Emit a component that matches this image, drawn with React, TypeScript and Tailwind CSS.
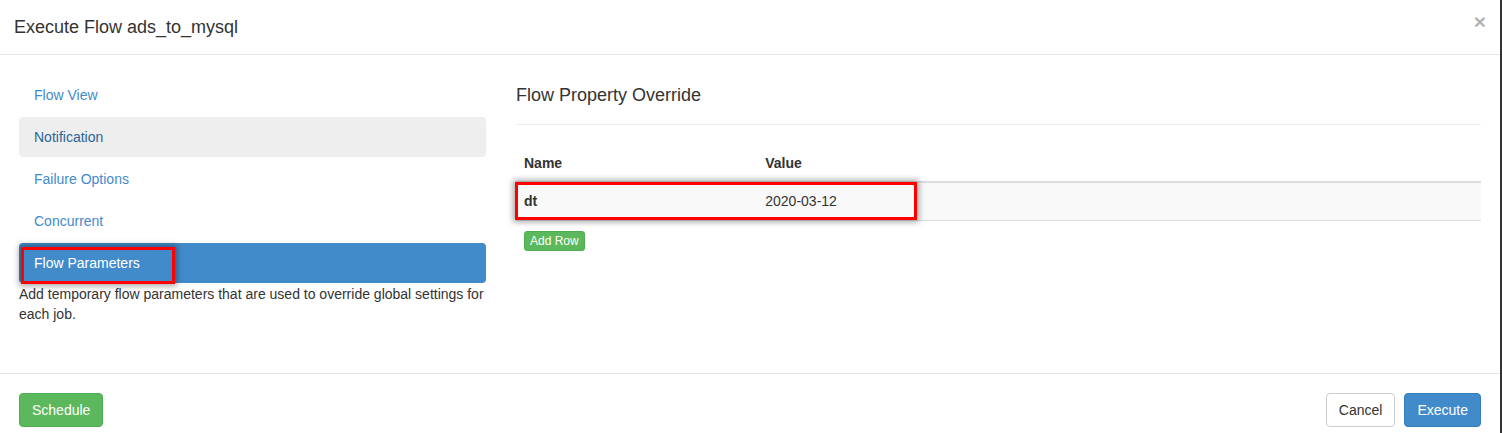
import React from 'react';

type NavItem = {
  key: string;
  label: string;
};

const navItems: NavItem[] = [
  { key: 'flow-view', label: 'Flow View' },
  { key: 'notification', label: 'Notification' },
  { key: 'failure', label: 'Failure Options' },
  { key: 'concurrent', label: 'Concurrent' },
  { key: 'params', label: 'Flow Parameters' },
];

const App: React.FC = () => {
  const hovered = 'notification';
  const active = 'params';

  return (
    <div
      className="relative h-[433px] w-[1502px] overflow-hidden bg-white text-[14px] text-[#333]"
      style={{ fontFamily: '"Liberation Sans", Arial, sans-serif' }}
    >
      <div className="flex h-full w-[1500px] flex-col">
        {/* header */}
        <div className="flex h-[55px] shrink-0 items-center justify-between border-b border-[#e5e5e5] pl-[14px] pr-[14px]">
          <h4 className="text-[18px] leading-[26px] text-[#333]">Execute Flow ads_to_mysql</h4>
          <button type="button" className="mb-[12px] text-[21px] font-bold leading-none text-[#b3b3b3]">
            ×
          </button>
        </div>

        {/* body */}
        <div className="flex h-[318px] shrink-0 gap-[30px] px-[19px] pt-[20px]">
          <div className="w-[467px] shrink-0">
            <ul className="flex flex-col gap-[2px]">
              {navItems.map((item) => {
                const isActive = item.key === active;
                const isHover = item.key === hovered;
                return (
                  <li key={item.key} className="relative">
                    <a
                      className={
                        'block h-[40px] rounded-[4px] pl-[15px] leading-[40px] ' +
                        (isActive
                          ? 'bg-[#428bca] text-white'
                          : isHover
                          ? 'bg-[#eeeeee] text-[#2a6496]'
                          : 'text-[#428bca]')
                      }
                    >
                      {item.label}
                    </a>
                    {isActive && (
                      <div className="pointer-events-none absolute left-[2px] top-[4px] h-[37px] w-[154px] border-[3px] border-[#ff0000] shadow-[0_0_6px_2px_rgba(0,0,0,0.35)]" />
                    )}
                  </li>
                );
              })}
            </ul>
            <p className="mt-[1px] leading-[20px] text-[#333]">
              Add temporary flow parameters that are used to override global settings for each job.
            </p>
          </div>

          <div className="flex-1">
            <h3 className="h-[40px] text-[18px] leading-[40px] text-[#333]">Flow Property Override</h3>
            <hr className="mt-[9px] border-t border-[#eeeeee]" />
            <div className="relative mt-[20px]">
              <table className="w-full border-collapse">
                <thead>
                  <tr className="border-b-2 border-[#dddddd]">
                    <th className="w-1/4 px-[8px] py-[8px] text-left font-bold leading-[20px]">Name</th>
                    <th className="px-[8px] py-[8px] text-left font-bold leading-[20px]">Value</th>
                  </tr>
                </thead>
                <tbody>
                  <tr className="border-b border-[#dddddd] bg-[#f9f9f9]">
                    <td className="px-[8px] py-[8px] font-bold leading-[21px]">dt</td>
                    <td className="px-[8px] py-[8px] leading-[21px]">2020-03-12</td>
                  </tr>
                </tbody>
              </table>
              <div className="pointer-events-none absolute left-[-1px] top-[37px] h-[38px] w-[402px] border-[3px] border-[#ff0000] shadow-[0_0_6px_2px_rgba(0,0,0,0.35)]" />
              <button
                type="button"
                className="ml-[8px] mt-[10px] h-[20px] rounded-[3px] border border-[#4cae4c] bg-[#5cb85c] px-[5px] text-[12px] leading-[18px] text-white"
              >
                Add Row
              </button>
            </div>
          </div>
        </div>

        {/* footer */}
        <div className="flex flex-1 items-start justify-between border-t border-[#e5e5e5] px-[19px] pt-[19px]">
          <button
            type="button"
            className="h-[34px] rounded-[4px] border border-[#4cae4c] bg-[#5cb85c] px-[12px] leading-[20px] text-white"
          >
            Schedule
          </button>
          <div className="flex gap-[9px]">
            <button
              type="button"
              className="h-[34px] rounded-[4px] border border-[#cccccc] bg-white px-[12px] leading-[20px] text-[#333]"
            >
              Cancel
            </button>
            <button
              type="button"
              className="h-[34px] rounded-[4px] border border-[#357ebd] bg-[#428bca] px-[12px] leading-[20px] text-white"
            >
              Execute
            </button>
          </div>
        </div>
      </div>
      <div className="absolute right-0 top-0 h-full w-[2px] bg-[#333]" />
    </div>
  );
};

export default App;
